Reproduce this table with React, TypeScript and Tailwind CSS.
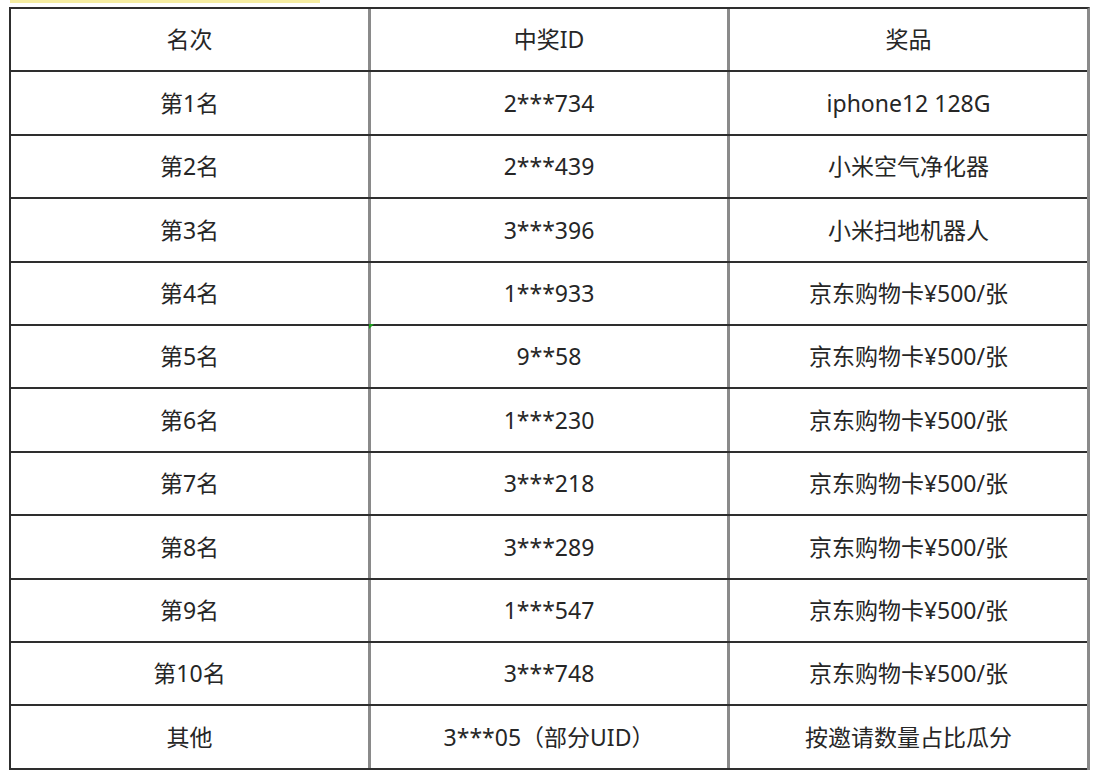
const rows: [string, string, string][] = [
  ["第1名", "2***734", "iphone12 128G"],
  ["第2名", "2***439", "小米空气净化器"],
  ["第3名", "3***396", "小米扫地机器人"],
  ["第4名", "1***933", "京东购物卡¥500/张"],
  ["第5名", "9**58", "京东购物卡¥500/张"],
  ["第6名", "1***230", "京东购物卡¥500/张"],
  ["第7名", "3***218", "京东购物卡¥500/张"],
  ["第8名", "3***289", "京东购物卡¥500/张"],
  ["第9名", "1***547", "京东购物卡¥500/张"],
  ["第10名", "3***748", "京东购物卡¥500/张"],
  ["其他", "3***05（部分UID）", "按邀请数量占比瓜分"],
];

function Row({ cells }: { cells: [string, string, string] }) {
  return (
    <div className="grid grid-cols-[357px_359px_1fr] h-[63.4px] border-b-2 border-[#2e2e2e]">
      {cells.map((c, i) => (
        <div
          key={i}
          className={`flex items-center justify-center text-[23px] text-[#262626] ${
            i > 0 ? "border-l-[3px] border-[#8a8a8a]" : ""
          }`}
        >
          {c}
        </div>
      ))}
    </div>
  );
}

export default function App() {
  return (
    <div
      className="w-[1104px] h-[776px] bg-white relative"
      style={{ fontFamily: '"Noto Sans", "Noto Sans CJK SC", sans-serif' }}
    >
      <div className="absolute left-[10px] top-0 w-[310px] h-[3px] bg-[#f6eda2]" />
      <div className="pt-[7px] pl-[9px]">
        <div className="w-[1081px] border-t-2 border-l-2 border-[#2e2e2e] border-r-[3px] border-r-[#8a8a8a]">
          <Row cells={["名次", "中奖ID", "奖品"]} />
          {rows.map((r) => (
            <Row key={r[0]} cells={r} />
          ))}
        </div>
      </div>
      <div className="absolute left-[369px] top-[324px] w-0 h-0 border-t-[5px] border-t-[#1fa01f] border-r-[5px] border-r-transparent" />
    </div>
  );
}
